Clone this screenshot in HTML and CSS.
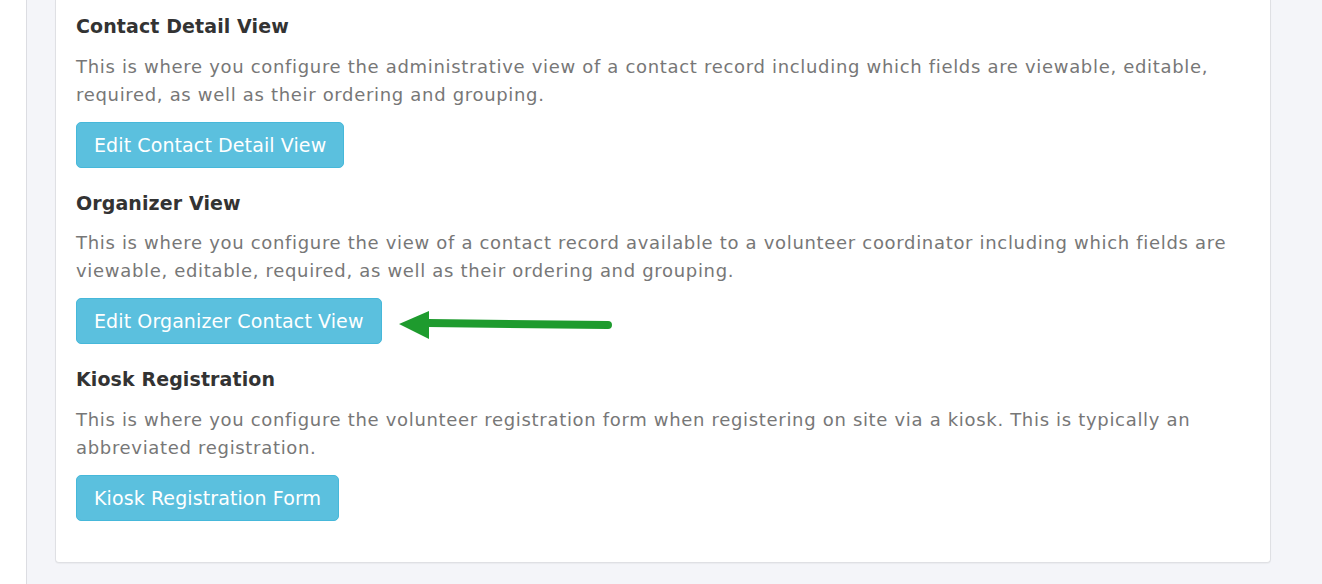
FILE: index.html
```html
<!DOCTYPE html>
<html lang="en">
<head>
    <meta charset="UTF-8">
    <title>Registration Settings</title>
    <link rel="stylesheet" href="styles.css">
</head>
<body>

<div class="layout">
    <div class="sidebar"></div>

    <div class="main">
        <div class="card">

            <div class="section">
                <h4>Contact Detail View</h4>
                <p>This is where you configure the administrative view of a contact record including which fields are viewable, editable, required, as well as their ordering and grouping.</p>
                <a class="btn" href="#">Edit Contact Detail View</a>
            </div>

            <div class="section">
                <h4>Organizer View</h4>
                <p>This is where you configure the view of a contact record available to a volunteer coordinator including which fields are viewable, editable, required, as well as their ordering and grouping.</p>
                <div class="btn-row">
                    <a class="btn" href="#">Edit Organizer Contact View</a>
                    <!-- annotation arrow -->
                    <svg class="arrow" width="216" height="32" viewBox="0 0 216 32">
                        <path d="M30 13 L210 15" stroke="#1e9b2e" stroke-width="8" stroke-linecap="round" fill="none"/>
                        <polygon points="1,14 31,1 31,29" fill="#1e9b2e"/>
                    </svg>
                </div>
            </div>

            <div class="section">
                <h4>Kiosk Registration</h4>
                <p>This is where you configure the volunteer registration form when registering on site via a kiosk. This is typically an abbreviated registration.</p>
                <a class="btn" href="#">Kiosk Registration Form</a>
            </div>

        </div>
    </div>
</div>

</body>
</html>
```

FILE: styles.css
```css
body {
    margin: 0;
    font-family: "DejaVu Sans", Verdana, sans-serif;
    background: #f4f5f9;
}
.layout {
    display: flex;
    min-height: 584px;
}
.sidebar {
    width: 26px;
    background: #fff;
    border-right: 1px solid #dcdde2;
    flex-shrink: 0;
}
.main {
    flex: 1;
    padding: 0 51px 21px 28px;
}
.card {
    background: #fff;
    border: 1px solid #dfe0e4;
    border-top: none;
    border-radius: 0 0 4px 4px;
    padding: 14px 20px 41px 20px;
    box-shadow: 0 1px 1px rgba(0, 0, 0, 0.04);
}
.section {
    display: flex;
    flex-direction: column;
    align-items: flex-start;
    margin-bottom: 23px;
}
.section:last-child {
    margin-bottom: 0;
}
h4 {
    font-size: 19px;
    font-weight: bold;
    letter-spacing: 0.1px;
    color: #333;
    margin: 0 0 14.5px;
    line-height: 24px;
}
p {
    font-size: 18px;
    line-height: 28px;
    letter-spacing: 0.68px;
    color: #777;
    margin: 0 0 13px;
}
.btn-row {
    display: flex;
    align-items: center;
    gap: 16px;
}
.btn {
    display: block;
    font-size: 19px;
    line-height: 24px;
    letter-spacing: 0.1px;
    padding: 10px 17px;
    color: #fff;
    background: #5bc0de;
    border: 1px solid #46b8da;
    border-radius: 5px;
    text-decoration: none;
}
.arrow {
    display: block;
    margin-top: 10px;
}
```
